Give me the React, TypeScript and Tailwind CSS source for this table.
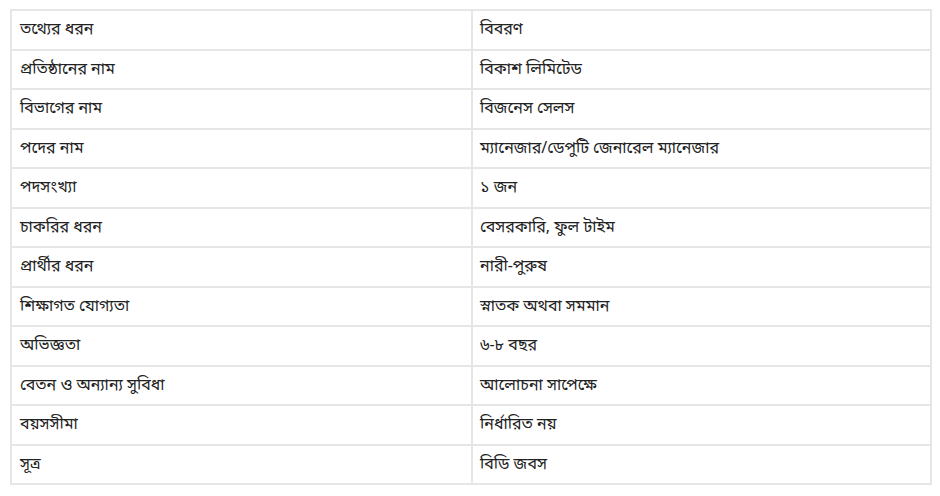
import React from "react";

const ROWS: [string, string][] = [
  ["তথ্যের ধরন", "বিবরণ"],
  ["প্রতিষ্ঠানের নাম", "বিকাশ লিমিটেড"],
  ["বিভাগের নাম", "বিজনেস সেলস"],
  ["পদের নাম", "ম্যানেজার/ডেপুটি জেনারেল ম্যানেজার"],
  ["পদসংখ্যা", "১ জন"],
  ["চাকরির ধরন", "বেসরকারি, ফুল টাইম"],
  ["প্রার্থীর ধরন", "নারী-পুরুষ"],
  ["শিক্ষাগত যোগ্যতা", "স্নাতক অথবা সমমান"],
  ["অভিজ্ঞতা", "৬-৮ বছর"],
  ["বেতন ও অন্যান্য সুবিধা", "আলোচনা সাপেক্ষে"],
  ["বয়সসীমা", "নির্ধারিত নয়"],
  ["সূত্র", "বিডি জবস"],
];

const cellClass =
  "h-[39.5px] border-2 border-[#e6e6e6] px-[8px] pb-[3px] align-middle text-left text-[16px] font-normal leading-none text-[#222]";

export default function App() {
  return (
    <div className="min-h-[496px] w-[940px] bg-white pl-[10px] pt-[9px] font-['Noto_Sans','Noto_Sans_Bengali',sans-serif]">
      <table className="w-[922px] table-fixed border-collapse">
        <tbody>
          {ROWS.map(([label, value]) => (
            <tr key={label}>
              <td className={`${cellClass} w-[461px]`}>{label}</td>
              <td className={`${cellClass} pl-[7px]`}>{value}</td>
            </tr>
          ))}
        </tbody>
      </table>
    </div>
  );
}
